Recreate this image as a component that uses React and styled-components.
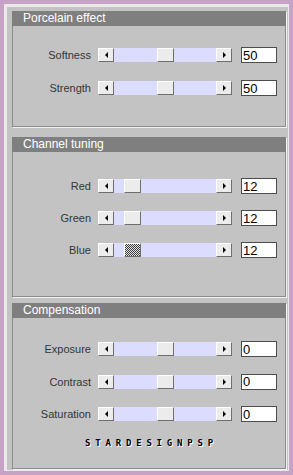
import { styled, createGlobalStyle } from "styled-components";

const GlobalStyle = createGlobalStyle`
  html, body {
    margin: 0;
    padding: 0;
    background: #c3c3c3;
  }
  * {
    box-sizing: border-box;
  }
`;

const Frame = styled.div`
  width: 293px;
  height: 475px;
  border: 4px solid #c6a3c6;
  padding: 7px 3px 2px 8px;
  background: #c3c3c3;
  box-shadow: inset 3px 3px 0 #ebe7eb, inset -1px -1px 0 #ebe7eb;
  display: flex;
  flex-direction: column;
  font-family: "Liberation Sans", Arial, sans-serif;
`;

const Panel = styled.section`
  height: ${(p) => p.$height}px;
  margin-top: ${(p) => p.$gap || 0}px;
  border: 1px solid #8c8c8c;
  border-top: none;
  box-shadow: 1px 1px 0 #f2f2f2;
  display: flex;
  flex-direction: column;
`;

const Header = styled.div`
  height: 15px;
  margin: 0 -1px;
  background: #7f7f7f;
  color: #ffffff;
  font-size: 12px;
  line-height: 15px;
  padding-left: 11px;
`;

const Rows = styled.div`
  display: flex;
  flex-direction: column;
  gap: ${(p) => p.$gap || 17}px;
  padding-top: ${(p) => p.$pad}px;
`;

const Row = styled.div`
  display: flex;
  align-items: center;
  height: 16px;
`;

const Label = styled.label`
  width: 78px;
  margin-right: 7px;
  text-align: right;
  font-size: 11px;
  color: #363636;
`;

const ArrowButton = styled.div`
  width: 16px;
  height: 14px;
  background: #ececec;
  border-style: solid;
  border-width: 1px;
  border-color: #ffffff #6e6e6e #6e6e6e #ffffff;
  display: flex;
  align-items: center;
  justify-content: center;

  &::after {
    content: "";
    width: 0;
    height: 0;
    border-top: 3px solid transparent;
    border-bottom: 3px solid transparent;
    ${(p) =>
      p.$dir === "left"
        ? "border-right: 3px solid #000;"
        : "border-left: 3px solid #000;"}
  }
`;

const Track = styled.div`
  position: relative;
  width: 102px;
  height: 14px;
  background: #dcdcff;
`;

const Thumb = styled.div`
  position: absolute;
  top: 0;
  width: 17px;
  height: 14px;
  border-style: solid;
  border-width: 1px;
  border-color: #ffffff #6e6e6e #6e6e6e #ffffff;
  background: ${(p) =>
    p.$focused
      ? "repeating-conic-gradient(#3a3a3a 0 25%, #e6e6e6 0 50%) 0 0 / 2px 2px"
      : "#ececec"};
`;

const ValueBox = styled.input`
  width: 36px;
  height: 16px;
  margin-left: 9px;
  border: 1px solid #4c4c4c;
  background: #ffffff;
  padding: 0 1px;
  font-family: "Liberation Sans", Arial, sans-serif;
  font-size: 13px;
  color: #000;
  outline: none;
`;

const Logo = styled.div`
  margin-top: 16px;
  text-align: center;
  font-family: "DejaVu Sans Mono", monospace;
  font-weight: bold;
  font-size: 9px;
  letter-spacing: 4.8px;
  color: #000;
  text-shadow: 1px 1px 0 #ffffff;
  padding-left: 5px;
`;

function Slider({ label, value, min, max, focused }) {
  const pos = ((value - min) / (max - min)) * 85;
  return (
    <Row>
      <Label>{label}</Label>
      <ArrowButton $dir="left" />
      <Track>
        <Thumb $focused={focused} style={{ left: `${pos}px` }} />
      </Track>
      <ArrowButton $dir="right" />
      <ValueBox defaultValue={value} />
    </Row>
  );
}

export default function App() {
  return (
    <>
      <GlobalStyle />
      <Frame>
        <Panel $height={116}>
          <Header>Porcelain effect</Header>
          <Rows $pad={21}>
            <Slider label="Softness" value={50} min={0} max={100} />
            <Slider label="Strength" value={50} min={0} max={100} />
          </Rows>
        </Panel>
        <Panel $height={160} $gap={10}>
          <Header>Channel tuning</Header>
          <Rows $pad={26} $gap={16}>
            <Slider label="Red" value={12} min={0} max={100} />
            <Slider label="Green" value={12} min={0} max={100} />
            <Slider label="Blue" value={12} min={0} max={100} focused />
          </Rows>
        </Panel>
        <Panel $height={166} $gap={6}>
          <Header>Compensation</Header>
          <Rows $pad={23} $gap={16.5}>
            <Slider label="Exposure" value={0} min={-100} max={100} />
            <Slider label="Contrast" value={0} min={-100} max={100} />
            <Slider label="Saturation" value={0} min={-100} max={100} />
          </Rows>
          <Logo>STARDESIGNPSP</Logo>
        </Panel>
      </Frame>
    </>
  );
}
